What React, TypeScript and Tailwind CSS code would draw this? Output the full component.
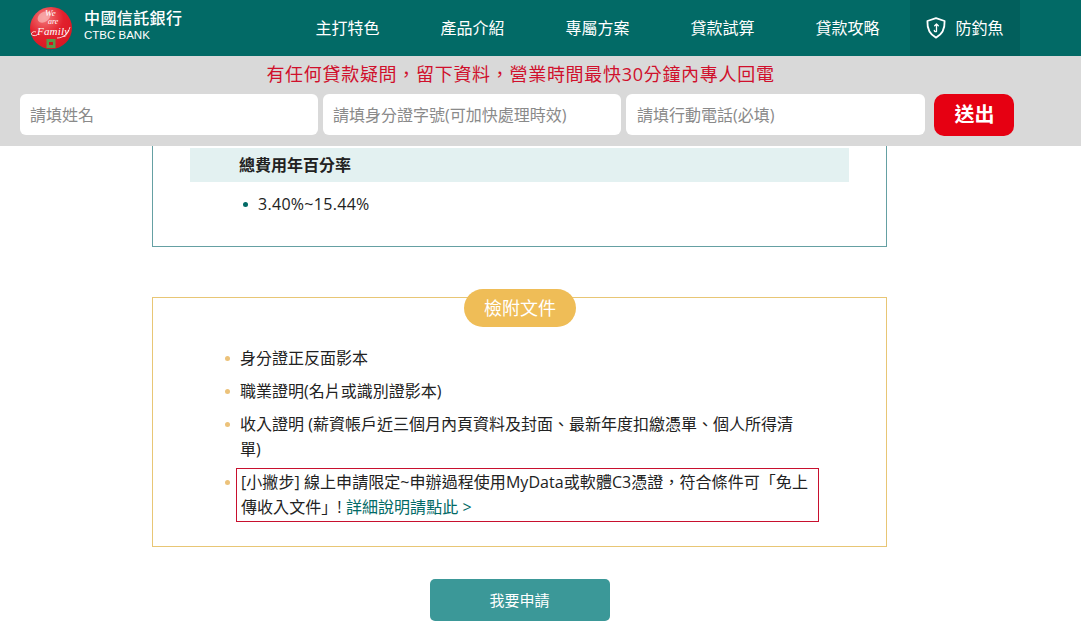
const font = '[font-family:"Open_Sans","Noto_Sans_CJK_TC",sans-serif]';

const navItems = ['主打特色', '產品介紹', '專屬方案', '貸款試算', '貸款攻略'];

function Logo() {
  return (
    <div className="flex items-center">
      <div className="relative h-[42px] w-[42px] overflow-hidden rounded-full bg-[radial-gradient(circle_at_35%_25%,#f47a7a,#e2202c_45%,#d5121f)]">
        <svg className="absolute inset-0" width="42" height="42" viewBox="0 0 42 42" fill="none">
          <ellipse cx="14" cy="10" rx="7" ry="5" fill="#f9b9b9" opacity="0.7" transform="rotate(-35 14 10)" />
          <path d="M1 27c1-2 3-3 5-2M1 27c2 2 4 2 6 1M27 31c6 0 11-4 13-11" stroke="#fff" strokeWidth="0.8" />
          <rect x="16.500" y="32" width="9" height="9" fill="#5a9a4a" />
          <rect x="19" y="35" width="4" height="3" fill="#d5121f" />
        </svg>
        <span className="absolute left-[15px] top-[2px] [font-family:'Liberation_Serif',serif] text-[9px] italic leading-[8px] text-white">We</span>
        <span className="absolute left-[18px] top-[11px] [font-family:'Liberation_Serif',serif] text-[8px] italic leading-[7px] text-white">are</span>
        <span className="absolute left-[7px] top-[20px] [font-family:'Liberation_Serif',serif] text-[11px] italic leading-[9px] tracking-[0.2px] text-white">Family</span>
      </div>
      <div className="mb-[6px] ml-[12px] text-white">
        <div className="text-[16px] font-medium leading-[20px] tracking-[0.4px]">中國信託銀行</div>
        <div className="[font-family:'Liberation_Sans',sans-serif] text-[11.5px] leading-[14px]">CTBC BANK</div>
      </div>
    </div>
  );
}

function ShieldIcon() {
  return (
    <svg width="20" height="22" viewBox="0 0 20 22" fill="none" stroke="currentColor" strokeWidth="1.800" strokeLinecap="round" strokeLinejoin="round">
      <path d="M10 1.200 18.600 4c.3 7.500-2.200 13.300-8.600 16.600C3.600 17.300 1.100 11.500 1.400 4L10 1.200Z" />
      <path d="M10.500 14.500V7M8.700 8.800l1.800-1.800 1.800 1.800M10.500 14.500c-1 .5-2 0-2.200-1" strokeWidth="1.300" />
    </svg>
  );
}

function Header() {
  return (
    <header className="flex h-14 items-stretch bg-[#026a66] pl-[30px] text-white">
      <Logo />
      <nav className="ml-[133px] flex items-center gap-[61px] text-[16px]">
        {navItems.map((item) => (
          <a key={item}>{item}</a>
        ))}
      </nav>
      <div className="ml-[31px] flex w-[110px] items-center gap-[9px] bg-[#025f5c] pl-[16px] text-[16px]">
        <ShieldIcon />
        <span>防釣魚</span>
      </div>
    </header>
  );
}

function ContactBar() {
  return (
    <section className="h-[90px] bg-[#d9d9d9] pt-[6px]">
      <p className="pr-[40px] text-center text-[18px] leading-[25px] tracking-[0.7px] text-[#d0102c]">
        有任何貸款疑問，留下資料，營業時間最快30分鐘內專人回電
      </p>
      <form className="mt-[7px] flex items-start pl-[20px]">
        <input className="h-[41px] w-[298px] rounded-[6px] bg-white px-[10px] text-[16px] placeholder:text-[#8a8a8a]" placeholder="請填姓名" />
        <input className="ml-[5px] h-[41px] w-[298px] rounded-[6px] bg-white px-[10px] text-[16px] placeholder:text-[#8a8a8a]" placeholder="請填身分證字號(可加快處理時效)" />
        <input className="ml-[5px] h-[41px] w-[299px] rounded-[6px] bg-white px-[11px] text-[16px] placeholder:text-[#8a8a8a]" placeholder="請填行動電話(必填)" />
        <button type="button" className="ml-[9px] h-[42px] w-[80px] rounded-[10px] bg-[#e60012] pl-[1px] text-[20px] font-bold text-white">送出</button>
      </form>
    </section>
  );
}

function Bullet({ color, children }: { color: string; children: React.ReactNode }) {
  return (
    <li className="relative">
      <span className={`absolute left-[-15px] top-[10px] h-[4.5px] w-[4.5px] rounded-full ${color}`} />
      {children}
    </li>
  );
}

export default function App() {
  return (
    <div className={`h-[644px] overflow-hidden bg-white text-[#222] ${font}`}>
      <Header />
      <ContactBar />
      <main className="mx-[152px] w-[735px]">
        <section className="h-[101px] border-x border-b border-[#65a0a3] px-[37px] pt-[2px]">
          <h3 className="h-[34px] bg-[#e3f1f1] pl-[49px] text-[16px] font-bold leading-[34px]">總費用年百分率</h3>
          <ul className="ml-[68px] mt-[10px] text-[16px] leading-[25px]">
            <Bullet color="bg-[#026a66]"><span className="tracking-[0.3px]">3.40%~15.44%</span></Bullet>
          </ul>
        </section>

        <section className="relative mt-[50px] h-[250px] border border-[#e8c675] pl-[87px] pr-[74px] pt-[48px]">
          <div className="absolute left-[311px] top-[-9px] flex h-[38px] w-[112px] items-center justify-center rounded-full bg-[#efbd57] text-[18px] text-white">檢附文件</div>
          <ul className="flex flex-col gap-[8px] text-[16px] leading-[25px]">
            <Bullet color="bg-[#ecc27a]">身分證正反面影本</Bullet>
            <Bullet color="bg-[#ecc27a]">職業證明(名片或識別證影本)</Bullet>
            <Bullet color="bg-[#ecc27a]">收入證明 (薪資帳戶近三個月內頁資料及封面、最新年度扣繳憑單、個人所得清單)</Bullet>
            <Bullet color="bg-[#ecc27a]">
              <div className="-mt-[2px] ml-[-4px] w-[583px] border border-[#c8102e] px-[4px] py-[1px] tracking-[0.06px]">
                [小撇步] 線上申請限定~申辦過程使用MyData或軟體C3憑證，符合條件可「免上傳收入文件」! <a className="text-[#026a66]">詳細說明請點此 &gt;</a>
              </div>
            </Bullet>
          </ul>
        </section>

        <div className="mt-[32px] flex justify-center">
          <a className="flex h-[42px] w-[180px] items-center justify-center rounded-[5px] bg-[#3b9898] text-[15px] text-white">我要申請</a>
        </div>
      </main>
    </div>
  );
}
